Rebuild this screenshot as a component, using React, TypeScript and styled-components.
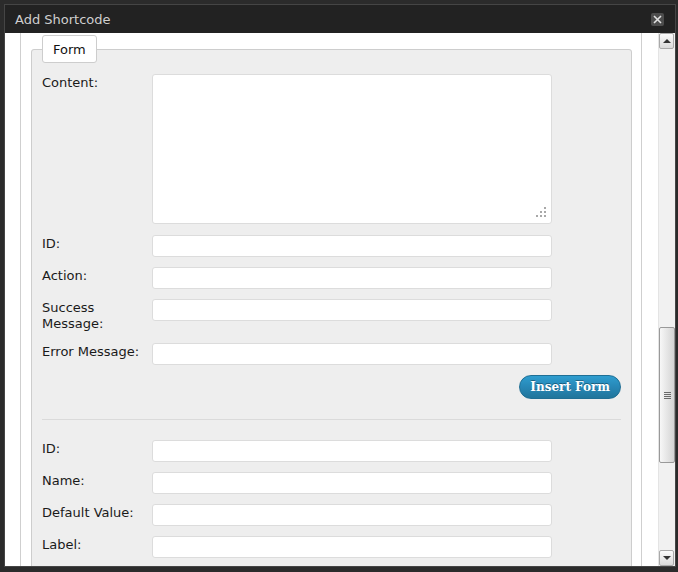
import React from 'react';
import styled, { createGlobalStyle } from 'styled-components';

const GlobalStyle = createGlobalStyle`
  html, body {
    margin: 0;
    padding: 0;
    background: #2b2b2b;
    height: 100%;
    overflow: hidden;
  }
  body {
    font-family: "DejaVu Sans", Verdana, sans-serif;
    font-size: 13px;
    color: #222;
  }
`;

const Dialog = styled.div`
  margin: 4px 2px 0 4px;
  width: 670px;
  border: 1px solid #454545;
  background: #222;
`;

const TitleBar = styled.div`
  height: 28px;
  display: flex;
  align-items: center;
  justify-content: space-between;
  padding: 0 11px 0 10px;
  background: #222;
  color: #cfcfcf;
  font-size: 13px;
`;

const CloseBtn = styled.button`
  width: 13px;
  height: 13px;
  padding: 0;
  border: 0;
  border-radius: 2px;
  background: #4d4d4d;
  display: flex;
  align-items: center;
  justify-content: center;
  cursor: pointer;
`;

const Body = styled.div`
  height: 533px;
  display: flex;
  background: #fff;
`;

const ScrollArea = styled.div`
  flex: 1;
  overflow: hidden;
`;

const Page = styled.div`
  margin: 0 16px 0 15px;
  min-height: 100%;
  padding: 2px 10px 0 10px;
  border-left: 1px solid #cfcfcf;
  border-right: 1px solid #cfcfcf;
`;

const Panel = styled.fieldset`
  margin: 0 -1px 0 0;
  padding: 11px 10px 10px 10px;
  border: 1px solid #cdcdcd;
  border-radius: 3px;
  background: #eeeeee;
  min-width: 0;
`;

const Tab = styled.legend`
  height: 26px;
  line-height: 27px;
  padding: 0 10px;
  border: 1px solid #cdcdcd;
  border-radius: 3px;
  background: #fff;
  font-size: 13px;
  color: #111;
`;

const Row = styled.div<{ $gap?: number }>`
  display: grid;
  grid-template-columns: 110px 400px;
  align-items: start;
  margin-bottom: ${p => p.$gap ?? 10}px;
`;

const Label = styled.label`
  line-height: 16px;
  padding: 1px 8px 1px 0;
  color: #1a1a1a;
`;

const Input = styled.input`
  box-sizing: border-box;
  width: 400px;
  height: 22px;
  margin: 0;
  border: 1px solid #dcdcdc;
  border-radius: 3px;
  background: #fff;
  font: inherit;
  outline: none;
`;

const AreaWrap = styled.div`
  position: relative;
  width: 400px;
  height: 150px;
`;

const Area = styled.textarea`
  box-sizing: border-box;
  display: block;
  width: 100%;
  height: 100%;
  margin: 0;
  border: 1px solid #dcdcdc;
  border-radius: 3px;
  background: #fff;
  resize: none;
  font: inherit;
  outline: none;
`;

const Grip = styled.svg`
  position: absolute;
  right: 5px;
  bottom: 6px;
`;

const Actions = styled.div`
  display: flex;
  justify-content: flex-end;
  margin-bottom: 20px;
`;

const PrimaryBtn = styled.button`
  height: 24px;
  padding: 0 10px;
  border: 1px solid #1f6f95;
  border-radius: 12px;
  background: linear-gradient(to bottom, #2f9dcf 0%, #2787b6 50%, #21759b 100%);
  color: #fff;
  font-family: "DejaVu Serif", serif;
  font-weight: bold;
  font-size: 12px;
  text-shadow: 0 -1px 0 rgba(0, 0, 0, 0.35);
  cursor: pointer;
`;

const Divider = styled.hr`
  margin: 0 0 20px;
  border: 0;
  border-top: 1px solid #dadada;
`;

const Scrollbar = styled.div`
  width: 16px;
  display: flex;
  flex-direction: column;
  background: #f1f1f1;
  border-left: 1px solid #e4e4e4;
`;

const ScrollBtn = styled.div<{ $down?: boolean }>`
  box-sizing: border-box;
  height: 16px;
  margin-right: 1px;
  border: 1px solid #a9a9a9;
  border-radius: 2px;
  background: linear-gradient(to bottom, #fbfbfb, #dadada);
  display: flex;
  align-items: center;
  justify-content: center;

  &::after {
    content: '';
    width: 0;
    height: 0;
    border-left: 4px solid transparent;
    border-right: 4px solid transparent;
    ${p => p.$down ? 'border-top: 4px solid #333;' : 'border-bottom: 4px solid #333;'}
  }
`;

const Track = styled.div<{ $size: number }>`
  flex: 0 0 ${p => p.$size}px;
`;

const Thumb = styled.div<{ $size: number }>`
  box-sizing: border-box;
  flex: 0 0 ${p => p.$size}px;
  border: 1px solid #999;
  border-radius: 2px;
  background: linear-gradient(to right, #f7f7f7, #d4d4d4);
  display: flex;
  flex-direction: column;
  align-items: center;
  justify-content: center;
  gap: 1px;
`;

const GripLine = styled.span`
  display: block;
  width: 7px;
  height: 1px;
  background: #6a6a6a;
`;

const fields1 = ['ID:', 'Action:', 'Success Message:', 'Error Message:'];
const fields2 = ['ID:', 'Name:', 'Default Value:', 'Label:'];

const Field = ({ label }: { label: string }) => (
  <Row>
    <Label>{label}</Label>
    <Input type="text" />
  </Row>
);

export default function App() {
  return (
    <>
      <GlobalStyle />
      <Dialog>
        <TitleBar>
          <span>Add Shortcode</span>
          <CloseBtn aria-label="Close">
            <svg width="9" height="9" viewBox="0 0 9 9">
              <path d="M1 1L8 8M8 1L1 8" stroke="#e2e2e2" strokeWidth="1.6" />
            </svg>
          </CloseBtn>
        </TitleBar>
        <Body>
          <ScrollArea>
            <Page>
              <Panel>
                <Tab>Form</Tab>
                <Row $gap={11}>
                  <Label>Content:</Label>
                  <AreaWrap>
                    <Area />
                    <Grip width="11" height="11" viewBox="0 0 11 11">
                      <rect x="8" y="0" width="2" height="2" fill="#a8a8a8" />
                      <rect x="4" y="4" width="2" height="2" fill="#a8a8a8" />
                      <rect x="8" y="4" width="2" height="2" fill="#a8a8a8" />
                      <rect x="0" y="8" width="2" height="2" fill="#a8a8a8" />
                      <rect x="4" y="8" width="2" height="2" fill="#a8a8a8" />
                      <rect x="8" y="8" width="2" height="2" fill="#a8a8a8" />
                    </Grip>
                  </AreaWrap>
                </Row>
                {fields1.map(f => <Field key={f} label={f} />)}
                <Actions>
                  <PrimaryBtn>Insert Form</PrimaryBtn>
                </Actions>
                <Divider />
                {fields2.map(f => <Field key={'b' + f} label={f} />)}
              </Panel>
            </Page>
          </ScrollArea>
          <Scrollbar>
            <ScrollBtn />
            <Track $size={278} />
            <Thumb $size={136}>
              <GripLine />
              <GripLine />
              <GripLine />
              <GripLine />
            </Thumb>
            <Track $size={87} />
            <ScrollBtn $down />
          </Scrollbar>
        </Body>
      </Dialog>
    </>
  );
}
